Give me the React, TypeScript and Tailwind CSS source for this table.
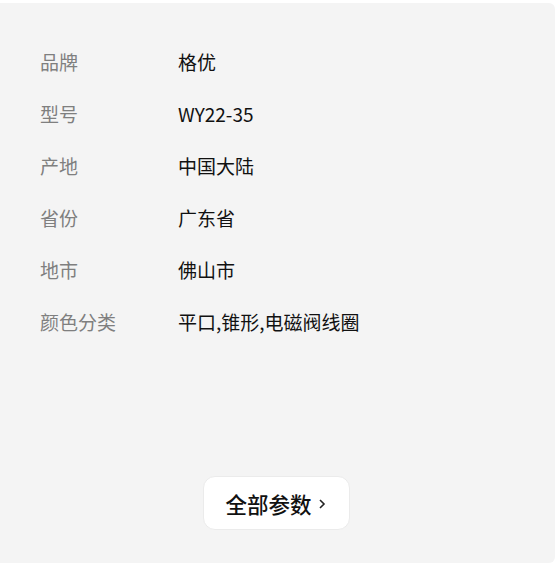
import React from "react";

const rows: [string, string][] = [
  ["品牌", "格优"],
  ["型号", "WY22-35"],
  ["产地", "中国大陆"],
  ["省份", "广东省"],
  ["地市", "佛山市"],
  ["颜色分类", "平口,锥形,电磁阀线圈"],
];

export default function App() {
  return (
    <div
      className="w-[557px] h-[569px] bg-white pt-[3px]"
      style={{ fontFamily: '"Noto Sans CJK SC", "Noto Sans", sans-serif' }}
    >
      <div className="w-[555px] h-[560px] bg-[#f4f4f4] rounded-r-[6px] flex flex-col pt-[33px]">
        <div className="flex flex-col pl-[40px]">
          {rows.map(([k, v]) => (
            <div key={k} className="h-[52px] flex items-center text-[19px]">
              <div className="w-[138px] text-[#7f7f7f]">{k}</div>
              <div className="text-[#111]">{v}</div>
            </div>
          ))}
        </div>
        <div className="flex justify-center mt-[128px] pr-[2px]">
          <div className="w-[147px] h-[54px] bg-white rounded-[12px] border border-[#ebebeb] flex items-center justify-center gap-[6px] pr-[2px]">
            <span className="text-[21.5px] text-[#111] font-medium mt-[2px]">全部参数</span>
            <svg width="8" height="12" viewBox="0 0 8 12" className="mt-[2px]">
              <path d="M2 2 L6 6 L2 10" fill="none" stroke="#222" strokeWidth="1.6" />
            </svg>
          </div>
        </div>
      </div>
    </div>
  );
}
